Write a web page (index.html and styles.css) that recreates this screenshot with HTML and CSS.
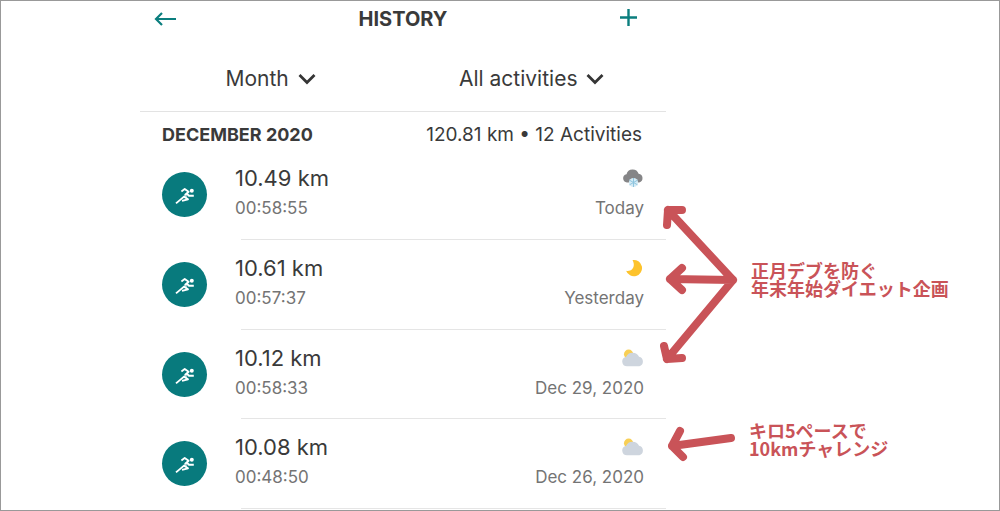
FILE: index.html
```html
<!DOCTYPE html>
<html lang="en">
<head>
<meta charset="utf-8">
<meta name="viewport" content="width=device-width, initial-scale=1">
<title>History</title>
<link rel="stylesheet" href="styles.css">
</head>
<body>
<svg width="0" height="0" class="defs" aria-hidden="true">
  <symbol id="runner" viewBox="0 0 45 45">
    <g fill="none" stroke="#fff" stroke-width="1.9" stroke-linejoin="round">
      <path d="M19.4 19.4L22.7 17L26.600 19.800L23 23"/>
      <path d="M25 21.600L27 23.800H31.800"/>
      <path d="M14 31.400L22 24.600L26 27.300L20 28.800"/>
    </g>
    <path d="M22 22.500L26 21L25 25.500L21.500 26Z" fill="#fff" opacity=".5"/>
    <circle cx="29.8" cy="18.800" r="2" fill="#fff"/>
  </symbol>
  <symbol id="cloudy" viewBox="1 1 20 18">
    <circle cx="7" cy="6.500" r="4.200" fill="#f8cf55"/>
    <path d="M5.500 17.500a4.300 4.300 0 0 1-.9-8.500a6.600 6.600 0 0 1 11.900-.2a4.500 4.500 0 0 1 .3 8.700z" fill="#ced5de"/>
  </symbol>
</svg>
<div class="page">
  <main class="app">
    <header class="topbar">
      <button class="icon-button" type="button" aria-label="Back"><svg width="22" height="16" viewBox="0 0 22 16"><path d="M22 8H2M8 2L2 8L8 14" fill="none" stroke="#0b7e7e" stroke-width="2.2"/></svg></button>
      <h1 class="title">HISTORY</h1>
      <button class="icon-button add" type="button" aria-label="Add"><svg width="17" height="20" viewBox="0 0 17 20"><path d="M0 8.500H17M8.500 0V17" stroke="#0b7e7e" stroke-width="2.4"/></svg></button>
    </header>
    <div class="filters">
      <div class="filter">
        <select class="select" aria-label="Period"><option>Month</option></select>
        <svg class="chevron" width="18" height="12" viewBox="0 0 18 12"><path d="M1.500 2L9 9.500L16.500 2" fill="none" stroke="#353535" stroke-width="2.800"/></svg>
      </div>
      <div class="filter">
        <select class="select" aria-label="Activity type"><option>All activities</option></select>
        <svg class="chevron" width="18" height="12" viewBox="0 0 18 12"><path d="M1.500 2L9 9.500L16.500 2" fill="none" stroke="#353535" stroke-width="2.800"/></svg>
      </div>
    </div>
    <div class="summary">
      <h2 class="month">DECEMBER 2020</h2>
      <p class="totals">120.81 km • 12 Activities</p>
    </div>
    <ul class="runs">
      <li class="run">
        <svg class="badge" viewBox="0 0 45 45"><use href="#runner"/></svg>
        <div class="details">
          <div class="line"><span class="distance">10.49 km</span>
            <svg class="weather" viewBox="1 0 20 20"><path d="M5 14.500a4.200 4.200 0 0 1-.5-8.300a6.300 6.300 0 0 1 12.100-.5a4.500 4.500 0 0 1 .6 8.800z" fill="#858587"/><circle cx="11.500" cy="14.500" r="4.600" fill="#d5ebf5"/><path d="M11.500 10v9M7.500 12.200l8 4.600M15.500 12.200l-8 4.600" stroke="#8ec5df" stroke-width="1"/></svg></div>
          <div class="line minor"><span>00:58:55</span><span>Today</span></div>
        </div>
      </li>
      <li class="run">
        <svg class="badge" viewBox="0 0 45 45"><use href="#runner"/></svg>
        <div class="details">
          <div class="line"><span class="distance">10.61 km</span>
            <svg class="weather" viewBox="0 0 22 20"><path d="M10.500 2A8.200 8.200 0 1 1 4.100 12.800C10 14 14 8.500 10.500 2Z" fill="#fdc32c"/></svg></div>
          <div class="line minor"><span>00:57:37</span><span>Yesterday</span></div>
        </div>
      </li>
      <li class="run">
        <svg class="badge" viewBox="0 0 45 45"><use href="#runner"/></svg>
        <div class="details">
          <div class="line"><span class="distance">10.12 km</span><svg class="weather"><use href="#cloudy"/></svg></div>
          <div class="line minor"><span>00:58:33</span><span>Dec 29, 2020</span></div>
        </div>
      </li>
      <li class="run">
        <svg class="badge" viewBox="0 0 45 45"><use href="#runner"/></svg>
        <div class="details">
          <div class="line"><span class="distance">10.08 km</span><svg class="weather"><use href="#cloudy"/></svg></div>
          <div class="line minor"><span>00:48:50</span><span>Dec 26, 2020</span></div>
        </div>
      </li>
    </ul>
  </main>
  <aside class="notes" lang="ja">
    <div class="note">
      <svg class="arrows" width="80" height="160" viewBox="0 0 80 160"><g fill="none" stroke="#c95358" stroke-width="8" stroke-linecap="round" stroke-linejoin="round"><path d="M73 75L8 5M22 5H8L7 20M73 75L10 74M22 63L10 74L22 85M73 75L7 154M4 141L7 154L22 153"/></g></svg>
      <p class="note-text">正月デブを防ぐ<br>年末年始ダイエット企画</p>
    </div>
    <div class="note">
      <svg class="arrows" width="78" height="40" viewBox="0 0 78 40"><g fill="none" stroke="#c95358" stroke-width="8" stroke-linecap="round" stroke-linejoin="round"><path d="M71 13L12 21M20 6L12 21L23 32"/></g></svg>
      <p class="note-text">キロ5ペースで<br>10kmチャレンジ</p>
    </div>
  </aside>
</div>
</body>
</html>
```
FILE: styles.css
```css
* { box-sizing: border-box; }
body { margin: 0; background: #fff; color: #3a3a3a; font-family: Inter, "Liberation Sans", sans-serif; }
h1, h2, p, ul { margin: 0; padding: 0; }
.defs { position: absolute; }
.page {
  display: grid;
  grid-template-columns: 139fr 526fr 333fr;
  min-height: 100vh;
  border: 1px solid #999;
}
.app { grid-column: 2; }
.topbar { display: grid; grid-template-columns: 1fr auto 1fr; align-items: center; height: 36px; }
.icon-button { display: flex; justify-self: start; margin-left: 14px; padding: 0; border: 0; background: none; }
.icon-button.add { justify-self: end; margin: 0 29px 0 0; }
.title { font-size: 20px; line-height: 24px; font-weight: 700; }
.filters { display: grid; grid-template-columns: 1fr 1fr; height: 75px; padding-right: 4px; border-bottom: 1px solid #e3e3e3; }
.filter { position: relative; justify-self: center; align-self: center; padding-top: 10px; }
.select {
  appearance: none;
  padding: 0 26px 0 0;
  border: 0;
  background: none;
  color: inherit;
  font: 400 21px/28px Inter, "Liberation Sans", sans-serif;
}
.chevron { position: absolute; right: 0; top: 18px; pointer-events: none; }
.summary { display: flex; align-items: center; justify-content: space-between; height: 38px; padding: 8px 24px 0 22px; }
.month { font-size: 18px; line-height: 24px; font-weight: 700; }
.totals { font-size: 19px; line-height: 24px; }
.runs { list-style: none; }
.run { display: flex; height: 90px; padding-left: 22px; }
.run:nth-child(3n) { height: 89px; }
.badge { flex: none; width: 45px; height: 45px; margin: 22px 28px 0 0; border-radius: 50%; background: #087a7d; }
.details { position: relative; flex: 1; padding: 14px 22px 0 0; }
.details::after { content: ""; position: absolute; left: 6px; right: 0; bottom: 0; border-bottom: 1px solid #e5e5e5; }
.line { display: flex; align-items: center; justify-content: space-between; height: 28px; }
.distance { font-size: 22px; line-height: 28px; }
.minor { height: 32px; color: #747474; font-size: 17px; line-height: 24px; }
.weather { width: 22px; height: 20px; }
.notes { display: flex; flex-direction: column; gap: 56px; padding-top: 204px; margin-left: -6px; }
.note { display: flex; align-items: center; gap: 11px; }
.arrows { flex: none; }
.note-text {
  padding-bottom: 12px;
  color: #c95358;
  font: 700 18px/18px "Noto Sans CJK JP", sans-serif;
  white-space: nowrap;
}
```
